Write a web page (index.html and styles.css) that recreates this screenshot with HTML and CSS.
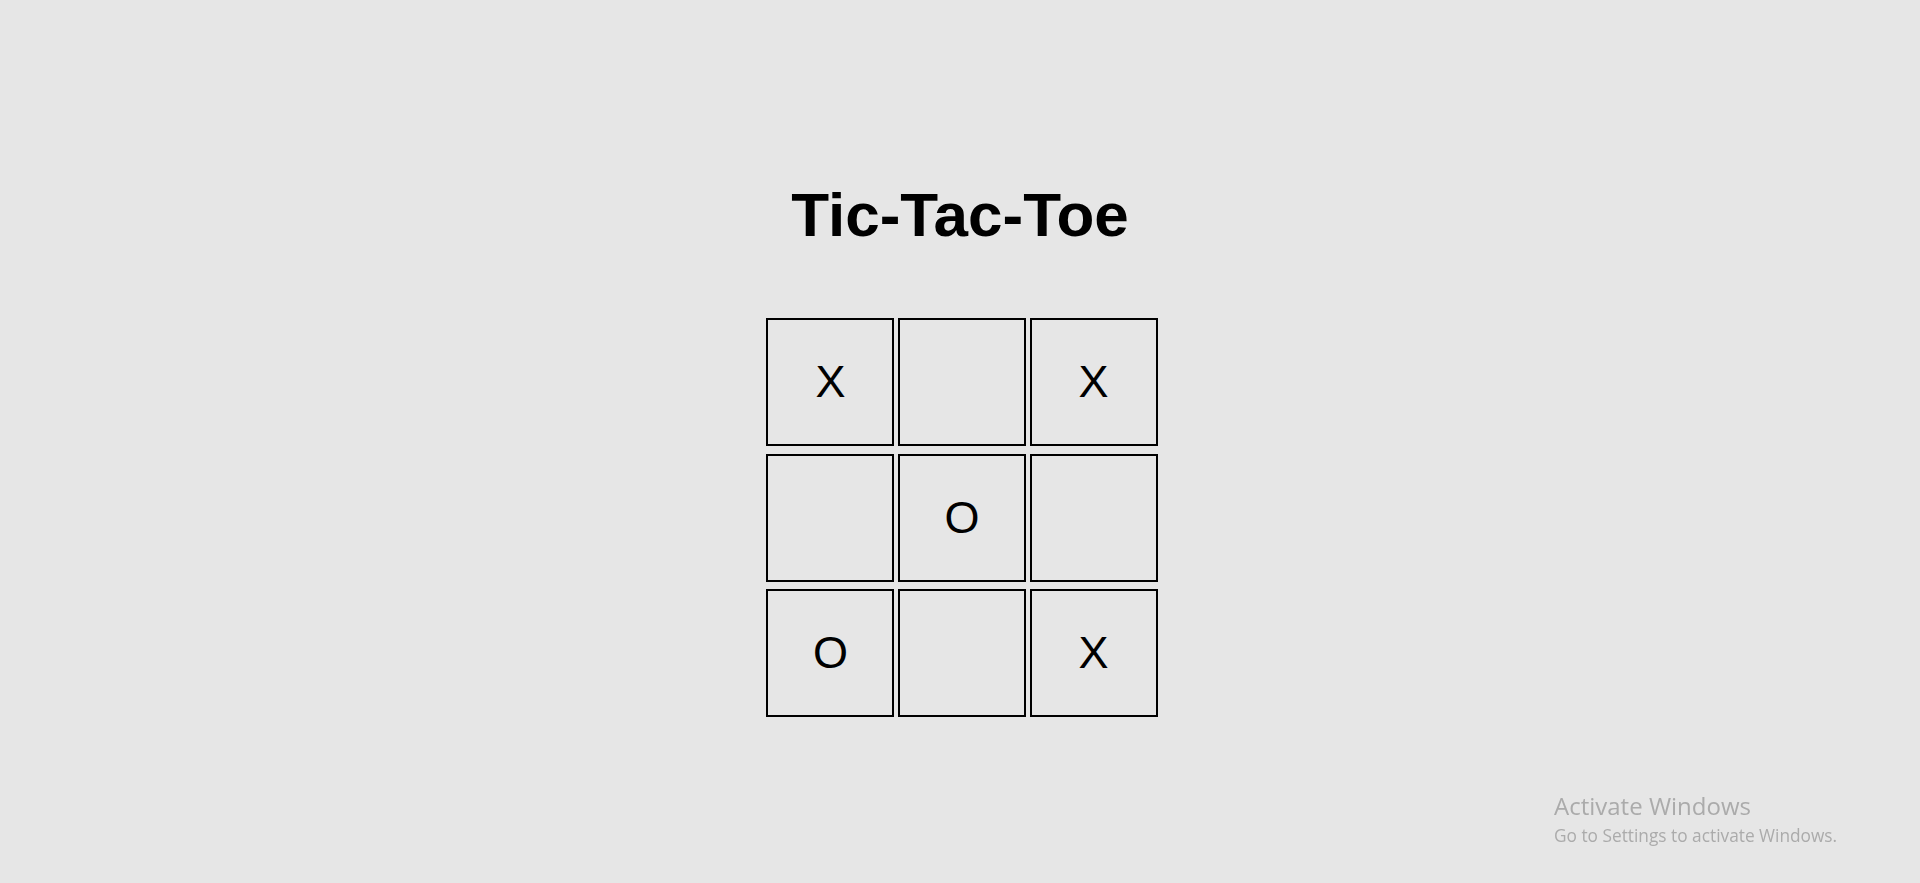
FILE: index.html
```html
<!DOCTYPE html>
<html lang="en">
<head>
    <meta charset="UTF-8">
    <meta name="viewport" content="width=device-width, initial-scale=1.0">
    <title>Tic-Tac-Toe</title>
    <link rel="stylesheet" href="styles.css">
</head>
<body>
    <h1 class="title">Tic-Tac-Toe</h1>

    <div class="board">
        <div class="row">
            <div class="cell">X</div>
            <div class="cell"></div>
            <div class="cell">X</div>
        </div>
        <div class="row">
            <div class="cell"></div>
            <div class="cell">O</div>
            <div class="cell"></div>
        </div>
        <div class="row">
            <div class="cell">O</div>
            <div class="cell"></div>
            <div class="cell">X</div>
        </div>
    </div>

    <div class="watermark">
        <div class="watermark-title">Activate Windows</div>
        <div class="watermark-text">Go to Settings to activate Windows.</div>
    </div>
</body>
</html>
```

FILE: styles.css
```css
body {
    font-family: "Liberation Sans", Arial, sans-serif;
    margin: 0;
    padding-top: 180px;
    background-color: #e6e6e6;
    display: flex;
    flex-direction: column;
    align-items: center;
    min-height: 883px;
    box-sizing: border-box;
    overflow: hidden;
}
.title {
    margin: 0;
    font-size: 62px;
    line-height: 70px;
    font-weight: bold;
    color: #000;
}
.board {
    margin-top: 68px;
    padding-left: 4px;
    display: flex;
    flex-direction: column;
    gap: 7.6px;
}
.row {
    display: flex;
    gap: 3.6px;
}
.cell {
    width: 128px;
    height: 128px;
    box-sizing: border-box;
    border: 2px solid #000;
    display: flex;
    align-items: center;
    justify-content: center;
    font-size: 45px;
    color: #000;
}
.watermark {
    position: fixed;
    left: 1554px;
    top: 790px;
    font-family: "Open Sans", "Noto Sans", sans-serif;
    color: #ababab;
}
.watermark-title {
    font-size: 24px;
    line-height: 32px;
}
.watermark-text {
    margin-top: 2px;
    font-size: 17.3px;
    line-height: 24px;
}
```
